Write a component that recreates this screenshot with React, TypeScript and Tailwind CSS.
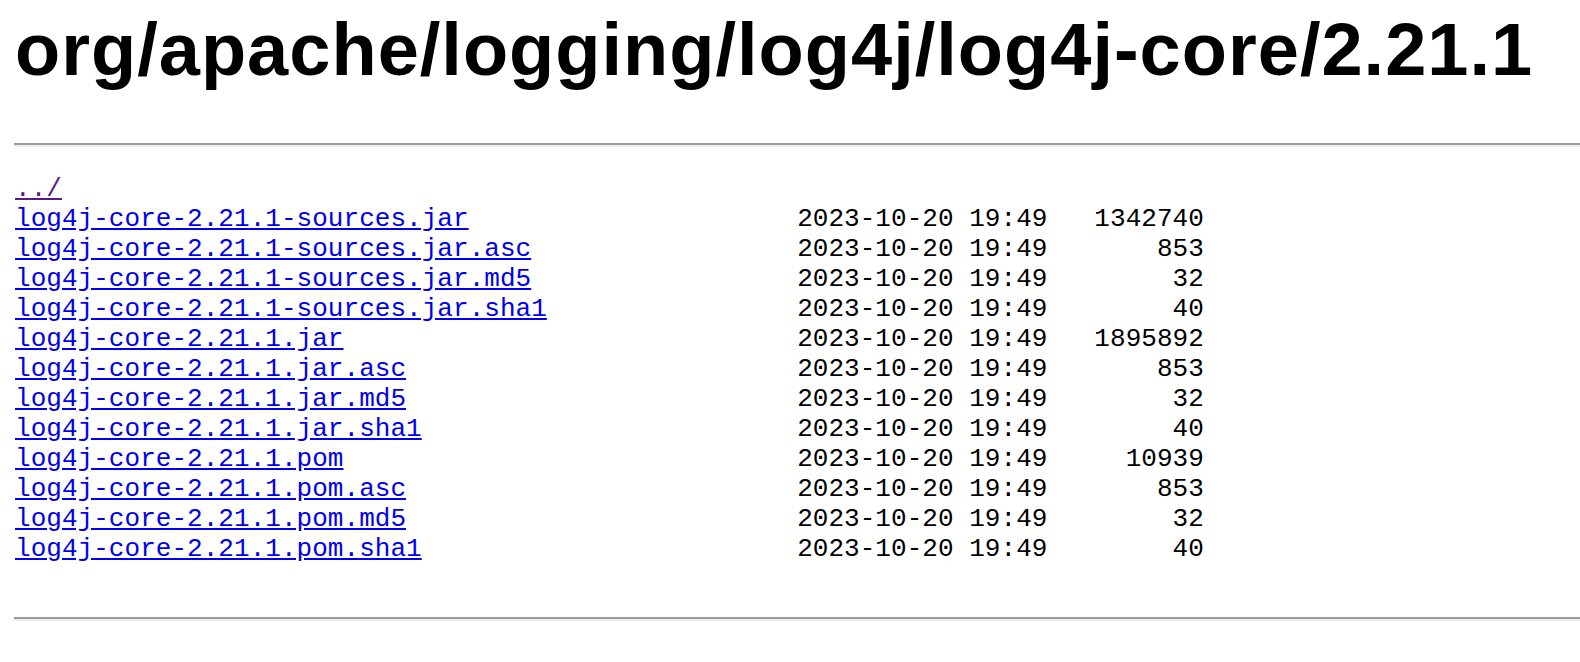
const files: [string, string][] = [
  ["log4j-core-2.21.1-sources.jar", "1342740"],
  ["log4j-core-2.21.1-sources.jar.asc", "853"],
  ["log4j-core-2.21.1-sources.jar.md5", "32"],
  ["log4j-core-2.21.1-sources.jar.sha1", "40"],
  ["log4j-core-2.21.1.jar", "1895892"],
  ["log4j-core-2.21.1.jar.asc", "853"],
  ["log4j-core-2.21.1.jar.md5", "32"],
  ["log4j-core-2.21.1.jar.sha1", "40"],
  ["log4j-core-2.21.1.pom", "10939"],
  ["log4j-core-2.21.1.pom.asc", "853"],
  ["log4j-core-2.21.1.pom.md5", "32"],
  ["log4j-core-2.21.1.pom.sha1", "40"],
];

const DATE = "2023-10-20 19:49";

export default function App() {
  return (
    <div className="min-h-[662px] bg-white pl-[15px] pt-[13px] text-black">
      <h1 className="font-['Liberation_Sans',Arial,sans-serif] text-[74px] font-bold leading-none tracking-[1px]">
        org/apache/logging/log4j/log4j-core/2.21.1
      </h1>
      <hr className="mt-[56px] -ml-px border-t-2 border-b-2 border-t-[#9a9a9a] border-b-[#ececec]" />
      <pre className="mt-[27px] font-['Liberation_Mono','Courier_New',monospace] text-[26px] leading-[30px] tracking-[0.04px] whitespace-pre">
        <a href="../" className="text-[#551a8b] underline">
          ../
        </a>
        {"\n"}
        {files.map(([name, size]) => (
          <span key={name}>
            <a href={name} className="text-[#0000ee] underline">
              {name}
            </a>
            {" ".repeat(50 - name.length)}
            {DATE}
            {size.padStart(10)}
            {"\n"}
          </span>
        ))}
      </pre>
      <hr className="mt-[53px] -ml-px border-t-2 border-b-2 border-t-[#9a9a9a] border-b-[#ececec]" />
    </div>
  );
}
